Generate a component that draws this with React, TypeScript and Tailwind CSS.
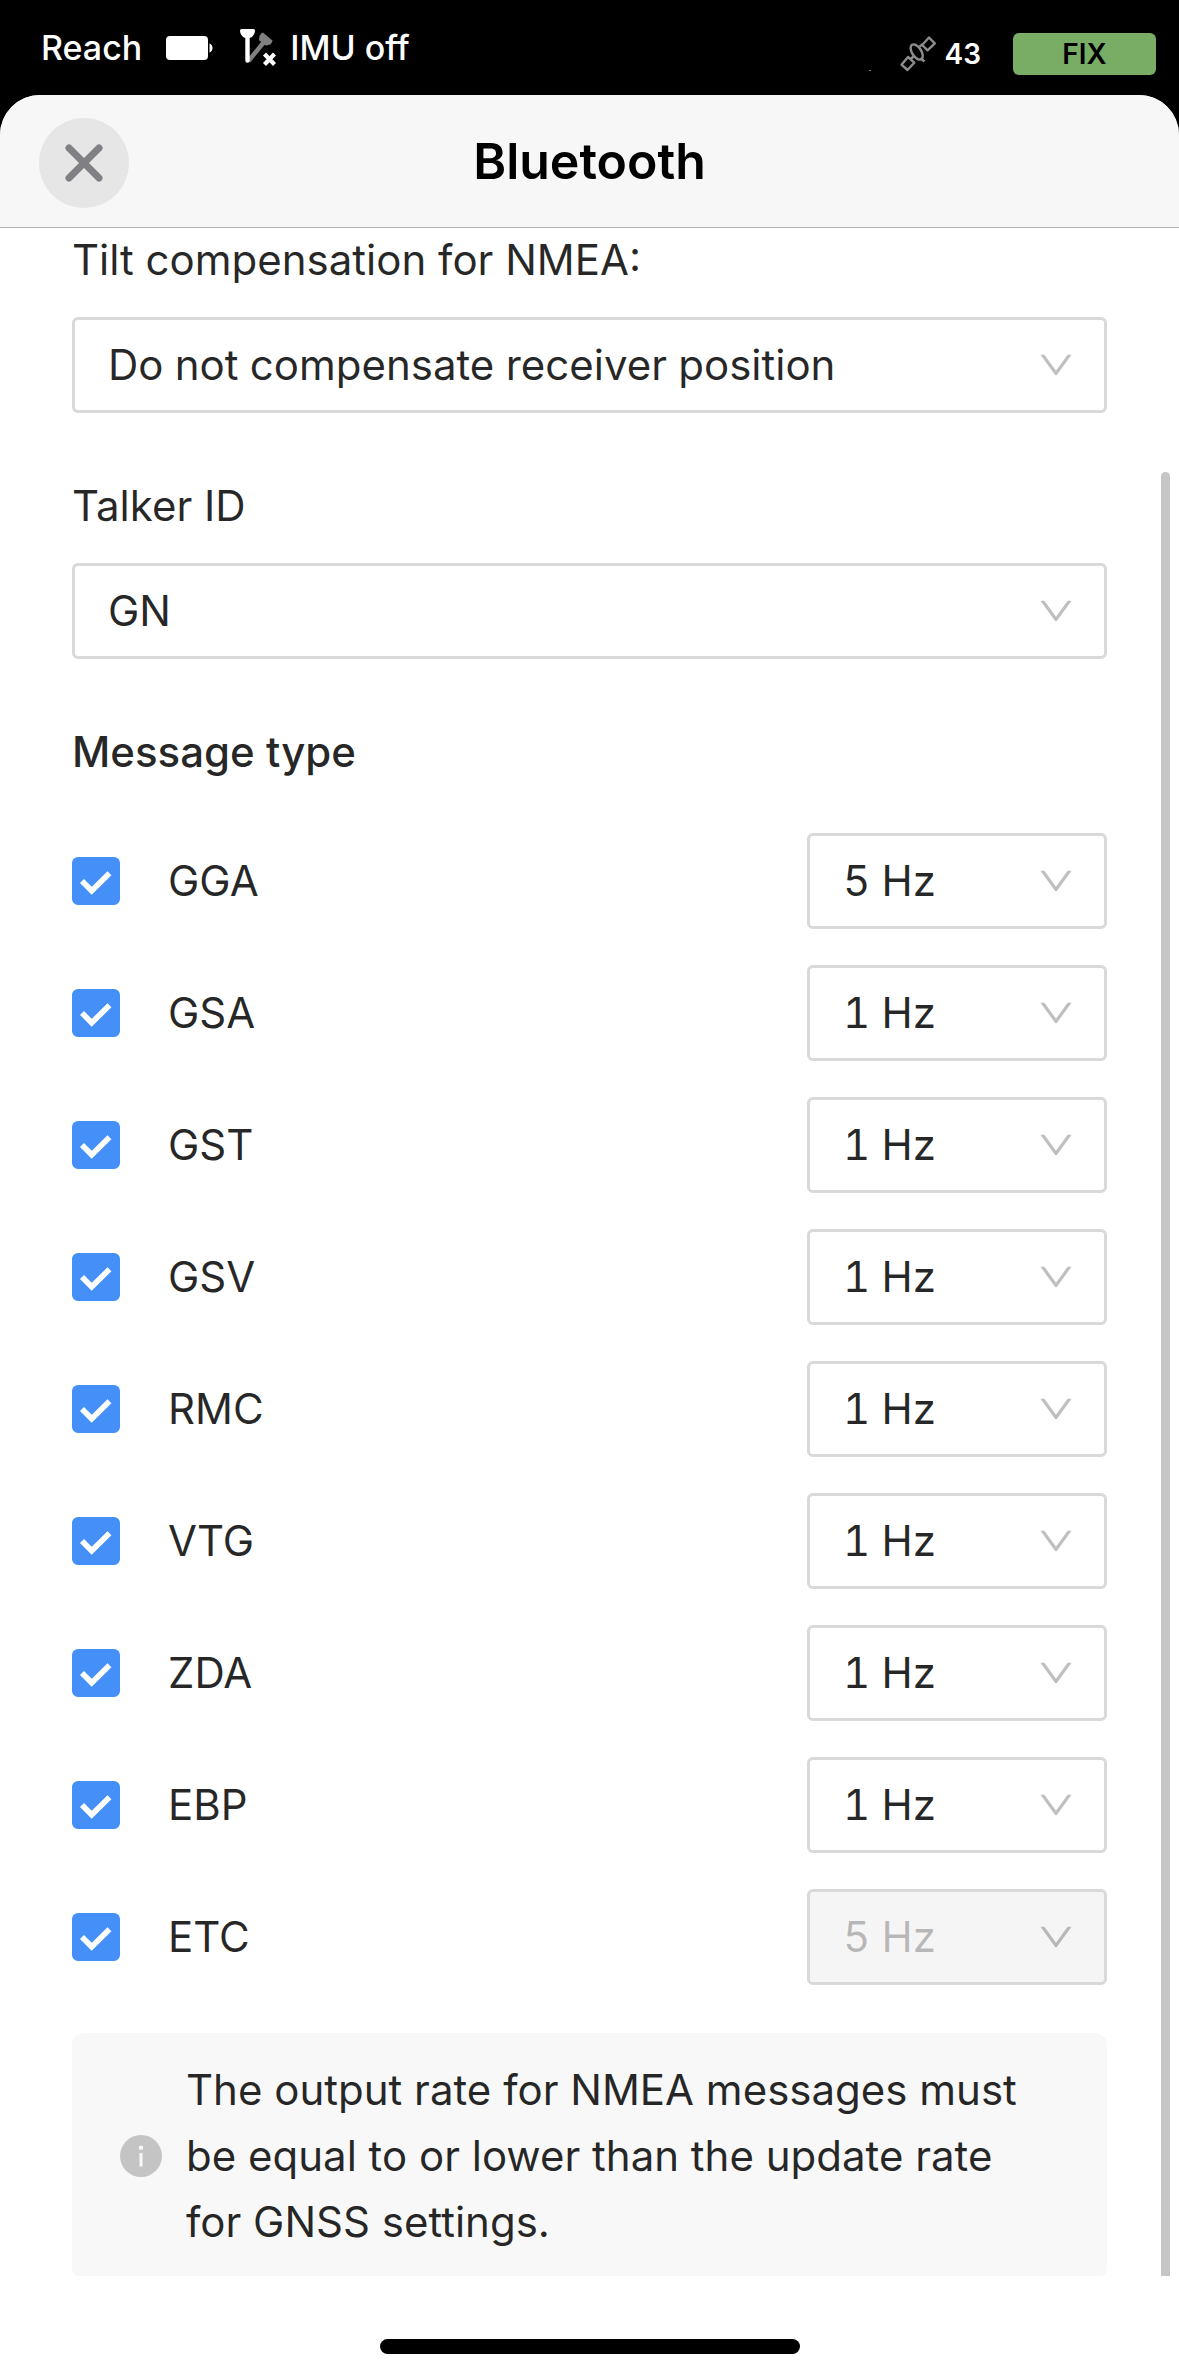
import React, { useState } from 'react';

interface MessageType {
  id: string;
  rate: string;
  locked?: boolean;
}

const MESSAGES: MessageType[] = [
  { id: 'GGA', rate: '5 Hz' },
  { id: 'GSA', rate: '1 Hz' },
  { id: 'GST', rate: '1 Hz' },
  { id: 'GSV', rate: '1 Hz' },
  { id: 'RMC', rate: '1 Hz' },
  { id: 'VTG', rate: '1 Hz' },
  { id: 'ZDA', rate: '1 Hz' },
  { id: 'EBP', rate: '1 Hz' },
  { id: 'ETC', rate: '5 Hz', locked: true },
];

const RATES = ['1 Hz', '2 Hz', '5 Hz', '10 Hz'];

const BatteryIcon = () => (
  <svg width="48" height="24" viewBox="0 0 48 24" aria-hidden="true">
    <rect width="42" height="24" rx="4" fill="#fff" />
    <path d="M43.500 7.500c2.200.6 3 2.300 3 4.500s-.8 3.900-3 4.500z" fill="#fff" />
  </svg>
);

const TiltIcon = () => (
  <svg width="36" height="38" viewBox="0 0 36 38" aria-hidden="true">
    <path d="M8.500 32 24 13" stroke="#808080" strokeWidth="4.400" />
    <path
      d="M22.500 4.500 31.500 12 30 14.500 26 15.500 20 10.800 20.500 7z"
      fill="#808080"
      stroke="#808080"
      strokeWidth="2"
      strokeLinejoin="round"
    />
    <path
      d="M1.500 0h12A1.500 1.500 0 0 1 15 1.500C15 4 13.800 6.300 12 8L9.700 9V31.600a2.200 2.200 0 0 1-4.400 0V9L3 8C1.200 6.300 0 4 0 1.500A1.500 1.500 0 0 1 1.500 0z"
      fill="#fff"
    />
    <path d="m24.500 25 10 10.500m0-10.500-10 10.500" stroke="#fff" strokeWidth="4.200" />
  </svg>
);

const SatelliteIcon = () => (
  <svg
    width="38"
    height="38"
    viewBox="0 0 38 38"
    fill="none"
    stroke="#8c8c8c"
    strokeWidth="2.400"
    strokeLinejoin="round"
    aria-hidden="true"
  >
    <path d="m30 2.500 5.800 5.800-7.300 7-5.300-5.300z" />
    <path d="m9 22 6.300 5.700-6.800 7.300-6-5.300z" />
    <path d="m20.500 11.500 3.500-2.500M11 24.500l4-3.500M21.500 23l4 3.500" />
    <ellipse cx="17.700" cy="17" rx="4.600" ry="8.600" transform="rotate(-33 17.700 17)" />
  </svg>
);

const DownIcon = () => (
  <svg
    className="pointer-events-none absolute top-[30px] right-[33px] size-9 text-black/25"
    viewBox="64 64 896 896"
    fill="currentColor"
    aria-hidden="true"
  >
    <path d="M884 256h-75c-5.100 0-9.900 2.500-12.900 6.600L512 654.200 227.900 262.600c-3-4.100-7.800-6.600-12.900-6.600h-75c-6.500 0-10.300 7.400-6.500 12.700l352.600 486.100c12.800 17.600 39 17.600 51.700 0l352.600-486.100c3.900-5.300.1-12.700-6.400-12.700z" />
  </svg>
);

const InfoIcon = () => (
  <svg className="size-[42px] shrink-0" viewBox="64 64 896 896" aria-hidden="true">
    <circle cx="512" cy="512" r="448" fill="#c4c4c4" />
    <circle cx="512" cy="336" r="48" fill="#f8f8f8" />
    <rect x="480" y="448" width="64" height="288" rx="8" fill="#f8f8f8" />
  </svg>
);

interface SelectProps {
  id?: string;
  label?: string;
  value: string;
  options: string[];
  disabled?: boolean;
  onChange: (value: string) => void;
}

const Select = ({ id, label, value, options, disabled, onChange }: SelectProps) => (
  <div className="relative w-full">
    <select
      id={id}
      aria-label={label}
      value={value}
      disabled={disabled}
      onChange={(e) => onChange(e.target.value)}
      className="block h-24 w-full appearance-none rounded-md border-3 border-[#d9d9d9] bg-white pr-20 pl-[33px] text-black/85 tabular-nums disabled:bg-[#f5f5f5] disabled:text-black/25 disabled:opacity-100"
    >
      {options.map((option) => (
        <option key={option}>{option}</option>
      ))}
    </select>
    <DownIcon />
  </div>
);

const MessageRow = ({ message }: { message: MessageType }) => {
  const [checked, setChecked] = useState(true);
  const [rate, setRate] = useState(message.rate);

  return (
    <li className="flex items-center justify-between">
      <label className="flex items-center gap-12">
        <span className="relative size-12">
          <input
            type="checkbox"
            checked={checked}
            onChange={(e) => setChecked(e.target.checked)}
            className="block size-12 appearance-none rounded-md border-3 border-[#d9d9d9] checked:border-[#448ff8] checked:bg-[#448ff8]"
          />
          {checked && (
            <svg className="pointer-events-none absolute inset-0" viewBox="0 0 48 48" fill="none" aria-hidden="true">
              <path d="m10 24 9.700 9.800L37.500 16.300" stroke="#fff" strokeWidth="5.600" />
            </svg>
          )}
        </span>
        {message.id}
      </label>
      <div className="w-[300px]">
        <Select
          label={`${message.id} rate`}
          value={rate}
          options={RATES}
          disabled={message.locked}
          onChange={setRate}
        />
      </div>
    </li>
  );
};

const StatusBar = () => (
  <div className="flex h-[95px] shrink-0 items-start justify-between pr-[23px] pl-[41px] text-white">
    <div className="flex h-[95px] items-center text-[34px] font-medium">
      <span>Reach</span>
      <span className="ml-6">
        <BatteryIcon />
      </span>
      <span className="ml-[26px]">
        <TiltIcon />
      </span>
      <span className="ml-3.5">IMU off</span>
    </div>
    <div className="flex items-center pt-[33px]">
      <span className="mr-7 mb-1 h-px w-0.5 self-end bg-[#777]" />
      <SatelliteIcon />
      <span className="ml-2 text-[28px] font-semibold">43</span>
      <span className="ml-8 flex h-[42px] w-[143px] items-center justify-center rounded-md bg-[#79ad66] text-[28px] font-semibold text-black">
        FIX
      </span>
    </div>
  </div>
);

export default function App() {
  const [tilt, setTilt] = useState('Do not compensate receiver position');
  const [talker, setTalker] = useState('GN');

  return (
    <div className="flex h-screen flex-col bg-black font-[Inter,sans-serif]">
      <StatusBar />

      <div className="flex min-h-0 flex-1 flex-col overflow-hidden rounded-t-[40px] bg-white">
        <header className="relative z-10 flex h-[132px] shrink-0 items-center justify-center bg-[#f7f7f7] shadow-[0_1px_0_#b2b2b2]">
          <button
            type="button"
            aria-label="Close"
            className="absolute top-[23px] left-[39px] flex size-[90px] items-center justify-center rounded-full bg-[#e6e6e6]"
          >
            <svg width="38" height="38" viewBox="0 0 38 38" aria-hidden="true">
              <path d="m4 4 30 30M34 4 4 34" stroke="#808084" strokeWidth="7" strokeLinecap="round" />
            </svg>
          </button>
          <h1 className="text-[50px] font-semibold text-black">Bluetooth</h1>
        </header>

        <div className="relative flex min-h-0 flex-1 flex-col">
          <main className="flex-1 overflow-y-auto px-[72px] text-[42px] leading-[66px] text-black/85 [scrollbar-width:none]">
            <div className="flex flex-col gap-6">
              <label htmlFor="tilt">Tilt compensation for NMEA:</label>
              <Select
                id="tilt"
                value={tilt}
                options={['Do not compensate receiver position', 'Compensate receiver position']}
                onChange={setTilt}
              />
            </div>

            <div className="mt-[60px] flex flex-col gap-6">
              <label htmlFor="talker">Talker ID</label>
              <Select id="talker" value={talker} options={['GN', 'GP']} onChange={setTalker} />
            </div>

            <h2 className="mt-[60px] font-medium">Message type</h2>
            <ul className="mt-12 flex flex-col gap-9">
              {MESSAGES.map((message) => (
                <MessageRow key={message.id} message={message} />
              ))}
            </ul>

            <div className="mt-12 flex items-center gap-6 rounded-xl bg-[#f8f8f8] px-12 py-6">
              <InfoIcon />
              <p>The output rate for NMEA messages must be equal to or lower than the update rate for GNSS settings.</p>
            </div>
          </main>

          {/* Scroll indicator */}
          <div className="absolute top-[245px] right-[9px] bottom-0 w-[9px] rounded-t-full bg-[#c6c6c6]" />
        </div>

        <footer className="flex h-[102px] shrink-0 items-end justify-center pb-6">
          <div className="h-[15px] w-[420px] rounded-full bg-black" />
        </footer>
      </div>
    </div>
  );
}
